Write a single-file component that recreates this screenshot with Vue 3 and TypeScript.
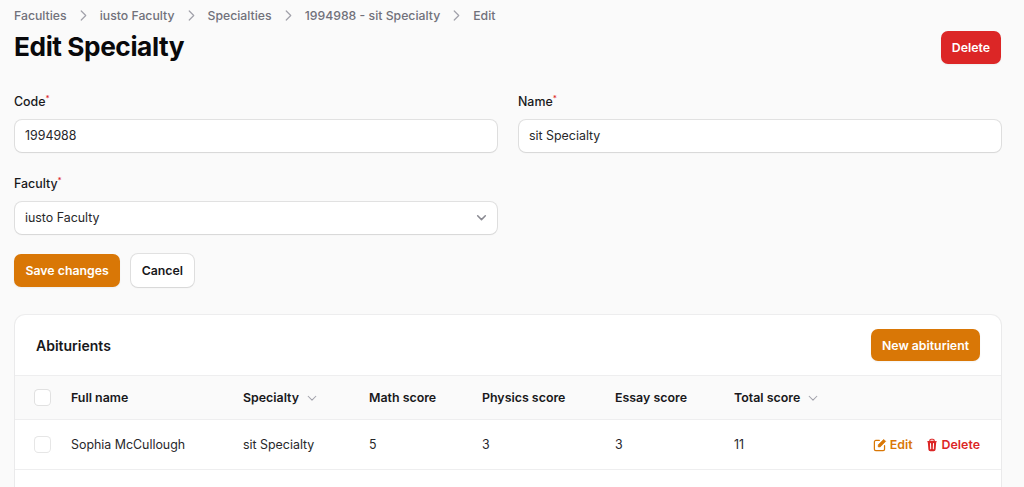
<script setup lang="ts">
interface Row {
  name: string;
  specialty: string;
  math: number;
  physics: number;
  essay: number;
  total: number;
}

const crumbs = ["Faculties", "iusto Faculty", "Specialties", "1994988 - sit Specialty"];

const rows: Row[] = [
  { name: "Sophia McCullough", specialty: "sit Specialty", math: 5, physics: 3, essay: 3, total: 11 },
];
</script>

<template>
  <div class="page">
    <nav class="crumbs">
      <template v-for="c in crumbs" :key="c">
        <span>{{ c }}</span>
        <svg class="crumb-sep" viewBox="0 0 20 20" fill="none" stroke="currentColor" stroke-width="1.6">
          <path d="M7 4l6 6-6 6" stroke-linecap="round" stroke-linejoin="round" />
        </svg>
      </template>
      <span>Edit</span>
    </nav>

    <header class="head">
      <h1>Edit Specialty</h1>
      <button class="btn danger" type="button">Delete</button>
    </header>

    <form class="form" @submit.prevent>
      <div class="field">
        <label class="label">Code<sup>*</sup></label>
        <div class="control">1994988</div>
      </div>
      <div class="field">
        <label class="label">Name<sup>*</sup></label>
        <div class="control">sit Specialty</div>
      </div>
      <div class="field">
        <label class="label">Faculty<sup>*</sup></label>
        <div class="control select">
          iusto Faculty
          <svg class="select-caret" viewBox="0 0 20 20" fill="none" stroke="currentColor" stroke-width="1.8">
            <path d="M5.500 8l4.500 4.500L14.500 8" stroke-linecap="round" stroke-linejoin="round" />
          </svg>
        </div>
      </div>
    </form>

    <div class="actions">
      <button class="btn primary" type="button">Save changes</button>
      <button class="btn plain" type="button">Cancel</button>
    </div>

    <section class="card">
      <div class="card-head">
        <h2>Abiturients</h2>
        <button class="btn primary" type="button">New abiturient</button>
      </div>
      <table class="table">
        <colgroup>
          <col style="width: 56px" />
          <col style="width: 172px" />
          <col style="width: 126px" />
          <col style="width: 113px" />
          <col style="width: 133px" />
          <col style="width: 119px" />
          <col style="width: 120px" />
          <col />
        </colgroup>
        <thead>
          <tr>
            <th><span class="check"></span></th>
            <th>Full name</th>
            <th>
              Specialty
              <svg class="sort" viewBox="0 0 20 20" fill="none" stroke="currentColor" stroke-width="1.5">
                <path d="M4.500 7.500L10 13l5.500-5.500" stroke-linecap="round" stroke-linejoin="round" />
              </svg>
            </th>
            <th>Math score</th>
            <th>Physics score</th>
            <th>Essay score</th>
            <th>
              Total score
              <svg class="sort" viewBox="0 0 20 20" fill="none" stroke="currentColor" stroke-width="1.5">
                <path d="M4.500 7.500L10 13l5.500-5.500" stroke-linecap="round" stroke-linejoin="round" />
              </svg>
            </th>
            <th></th>
          </tr>
        </thead>
        <tbody>
          <tr v-for="r in rows" :key="r.name">
            <td><span class="check"></span></td>
            <td>{{ r.name }}</td>
            <td>{{ r.specialty }}</td>
            <td>{{ r.math }}</td>
            <td>{{ r.physics }}</td>
            <td>{{ r.essay }}</td>
            <td>{{ r.total }}</td>
            <td>
              <div class="row-actions">
                <a class="link edit">
                  <svg viewBox="0 0 20 20" fill="none" stroke="currentColor" stroke-width="1.8">
                    <path d="M9 3.500H4a2 2 0 0 0-2 2V16a2 2 0 0 0 2 2h10.500a2 2 0 0 0 2-2v-5" stroke-linecap="round" />
                    <path d="M7.500 12.700V9.800l7.800-7.800 2.800 2.800-7.800 7.900H7.500z" fill="currentColor" stroke-linejoin="round" stroke-width="1" />
                  </svg>
                  Edit
                </a>
                <a class="link del">
                  <svg viewBox="0 0 20 20" fill="currentColor">
                    <path fill-rule="evenodd" clip-rule="evenodd" d="M8.750 1A2.750 2.750 0 0 0 6 3.750v.443c-.795.077-1.584.176-2.365.298a.75.75 0 1 0 .230 1.482l.149-.022.841 10.518A2.750 2.750 0 0 0 7.596 19h4.807a2.750 2.750 0 0 0 2.742-2.530l.841-10.520.149.023a.75.75 0 0 0 .23-1.482A41 41 0 0 0 14 4.193V3.750A2.750 2.750 0 0 0 11.250 1h-2.500zM10 4c.840 0 1.673.025 2.500.075V3.750c0-.690-.560-1.250-1.250-1.250h-2.500c-.690 0-1.250.560-1.250 1.250v.325C8.327 4.025 9.160 4 10 4zM8.580 7.720a.75.75 0 0 0-1.500.060l.300 7.500a.75.75 0 1 0 1.500-.060l-.300-7.500zm4.340.060a.75.75 0 1 0-1.500-.060l-.300 7.500a.75.75 0 1 0 1.500.060l.300-7.500z" />
                  </svg>
                  Delete
                </a>
              </div>
            </td>
          </tr>
          <tr class="filler">
            <td colspan="8"></td>
          </tr>
        </tbody>
      </table>
    </section>
  </div>
</template>

<style>
html,
body {
  margin: 0;
  background: #fafafa;
  overflow: hidden;
}
</style>

<style scoped>
.page {
  box-sizing: border-box;
  width: 1024px;
  height: 487px;
  padding: 8px 22px 0 14px;
  overflow: hidden;
  font-family: Inter, "Liberation Sans", sans-serif;
  font-size: 12.4px;
  color: #18181b;
}
.crumbs {
  display: flex;
  align-items: center;
  gap: 9px;
  height: 15px;
  font-size: 12.25px;
  font-weight: 500;
  color: #71717a;
}
.crumb-sep {
  width: 15px;
  height: 15px;
  color: #a1a1aa;
}
.head {
  display: flex;
  justify-content: space-between;
  align-items: flex-start;
  margin-top: 6px;
  height: 43px;
}
h1 {
  margin: 0;
  font-size: 26.250px;
  line-height: 36px;
  font-weight: 700;
  letter-spacing: -0.43px;
  color: #09090b;
}
.btn {
  box-sizing: border-box;
  height: 32.500px;
  padding: 0 11px;
  border: 0;
  border-radius: 7px;
  font: 600 12.3px Inter, "Liberation Sans", sans-serif;
  color: #fff;
  box-shadow: 0 1px 2px rgba(0, 0, 0, 0.05);
}
.danger {
  background: #dc2626;
  margin-top: 2px;
  margin-right: 1px;
}
.primary {
  background: #d97706;
}
.plain {
  background: #fff;
  color: #18181b;
  box-shadow: 0 0 0 1px rgba(9, 9, 11, 0.1), 0 1px 2px rgba(0, 0, 0, 0.05);
}
.form {
  display: grid;
  grid-template-columns: 1fr 1fr;
  gap: 23px 20px;
  margin-top: 21px;
}
.field {
  display: flex;
  flex-direction: column;
  gap: 10px;
}
.label {
  font-weight: 500;
  line-height: 17px;
  color: #18181b;
}
.label sup {
  color: #dc2626;
  font-size: 8px;
  line-height: 0;
  font-weight: 500;
}
.control {
  box-sizing: border-box;
  height: 32px;
  display: flex;
  align-items: center;
  padding: 0 10px 1px;
  margin: 0 1px;
  background: #fff;
  border-radius: 7px;
  box-shadow: 0 0 0 1px rgba(9, 9, 11, 0.1), 0 1px 2px rgba(0, 0, 0, 0.05);
  color: #27272a;
}
.select {
  justify-content: space-between;
}
.select-caret {
  width: 17px;
  height: 17px;
  color: #8a8a92;
  margin-right: -3px;
}
.actions {
  display: flex;
  gap: 11px;
  margin-top: 20px;
}
.actions .primary {
  padding: 0 11.500px;
}
.actions .plain {
  padding: 0 10.500px;
}
.card {
  margin: 28.500px 1px 0;
  background: #fff;
  border-radius: 10px 10px 0 0;
  box-shadow: 0 0 0 1px rgba(9, 9, 11, 0.05), 0 1px 2px rgba(0, 0, 0, 0.05);
  overflow: hidden;
}
.card-head {
  display: flex;
  justify-content: space-between;
  align-items: center;
  height: 60px;
  padding: 0 21px;
}
h2 {
  margin: 0;
  font-size: 14px;
  font-weight: 600;
  color: #18181b;
}
.table {
  width: 100%;
  border-collapse: collapse;
  table-layout: fixed;
}
th,
td {
  padding: 0;
  text-align: left;
  white-space: nowrap;
}
th {
  height: 43px;
  background: #fafafa;
  font-weight: 600;
  border-top: 1px solid #eeeeef;
  border-bottom: 1px solid #eeeeef;
  color: #18181b;
}
td {
  height: 49px;
  border-bottom: 1px solid #eeeeef;
  color: #27272a;
}
th:first-child,
td:first-child {
  padding-left: 20px;
}
.check {
  display: block;
  box-sizing: border-box;
  width: 15px;
  height: 15px;
  background: #fff;
  border-radius: 3.500px;
  box-shadow: 0 0 0 1px rgba(9, 9, 11, 0.1);
}
.sort {
  width: 14px;
  height: 14px;
  color: #a1a1aa;
  vertical-align: -3px;
  margin-left: 3px;
}
.row-actions {
  display: flex;
  justify-content: flex-end;
  gap: 12px;
  padding-right: 21px;
  font-weight: 600;
}
.link {
  display: inline-flex;
  align-items: center;
  gap: 3px;
}
.link svg {
  width: 14px;
  height: 14px;
}
.edit {
  color: #d97706;
}
.del {
  color: #dc2626;
}
</style>
